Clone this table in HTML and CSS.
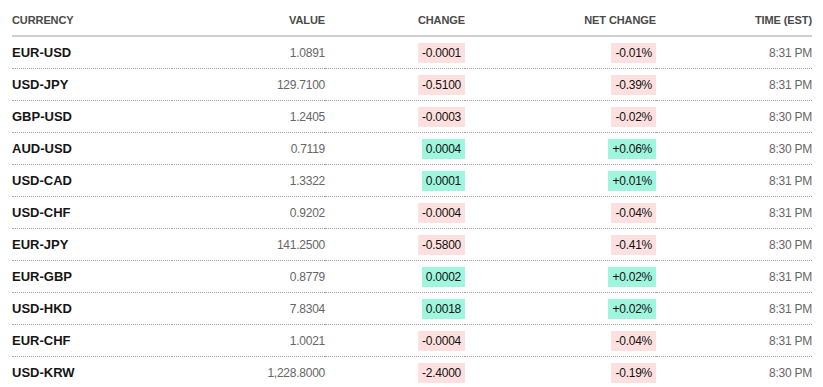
FILE: index.html
```html
<!DOCTYPE html>
<html>
<head>
<meta charset="utf-8">
<link rel="stylesheet" href="styles.css">
</head>
<body>
<table class="fx">
  <colgroup>
    <col class="c-cur"><col class="c-val"><col class="c-chg"><col class="c-net"><col class="c-time">
  </colgroup>
  <thead>
    <tr>
      <th class="left">CURRENCY</th>
      <th>VALUE</th>
      <th>CHANGE</th>
      <th>NET CHANGE</th>
      <th>TIME (EST)</th>
    </tr>
  </thead>
  <tbody>
    <tr><td class="name">EUR-USD</td><td class="num">1.0891</td><td><span class="badge neg">-0.0001</span></td><td><span class="badge neg">-0.01%</span></td><td class="num">8:31 PM</td></tr>
    <tr><td class="name">USD-JPY</td><td class="num">129.7100</td><td><span class="badge neg">-0.5100</span></td><td><span class="badge neg">-0.39%</span></td><td class="num">8:31 PM</td></tr>
    <tr><td class="name">GBP-USD</td><td class="num">1.2405</td><td><span class="badge neg">-0.0003</span></td><td><span class="badge neg">-0.02%</span></td><td class="num">8:30 PM</td></tr>
    <tr><td class="name">AUD-USD</td><td class="num">0.7119</td><td><span class="badge pos">0.0004</span></td><td><span class="badge pos">+0.06%</span></td><td class="num">8:30 PM</td></tr>
    <tr><td class="name">USD-CAD</td><td class="num">1.3322</td><td><span class="badge pos">0.0001</span></td><td><span class="badge pos">+0.01%</span></td><td class="num">8:31 PM</td></tr>
    <tr><td class="name">USD-CHF</td><td class="num">0.9202</td><td><span class="badge neg">-0.0004</span></td><td><span class="badge neg">-0.04%</span></td><td class="num">8:31 PM</td></tr>
    <tr><td class="name">EUR-JPY</td><td class="num">141.2500</td><td><span class="badge neg">-0.5800</span></td><td><span class="badge neg">-0.41%</span></td><td class="num">8:30 PM</td></tr>
    <tr><td class="name">EUR-GBP</td><td class="num">0.8779</td><td><span class="badge pos">0.0002</span></td><td><span class="badge pos">+0.02%</span></td><td class="num">8:31 PM</td></tr>
    <tr><td class="name">USD-HKD</td><td class="num">7.8304</td><td><span class="badge pos">0.0018</span></td><td><span class="badge pos">+0.02%</span></td><td class="num">8:31 PM</td></tr>
    <tr><td class="name">EUR-CHF</td><td class="num">1.0021</td><td><span class="badge neg">-0.0004</span></td><td><span class="badge neg">-0.04%</span></td><td class="num">8:31 PM</td></tr>
    <tr><td class="name">USD-KRW</td><td class="num">1,228.8000</td><td><span class="badge neg">-2.4000</span></td><td><span class="badge neg">-0.19%</span></td><td class="num">8:30 PM</td></tr>
  </tbody>
</table>
</body>
</html>
```
FILE: styles.css
```css
html, body {
  margin: 0;
  padding: 0;
  background: #ffffff;
}
body {
  font-family: "Liberation Sans", Arial, sans-serif;
  color: #111;
}
.fx {
  border-collapse: collapse;
  margin: 0 12px;
  width: 800px;
  table-layout: fixed;
}
.c-cur { width: 160px; }
.c-val { width: 153px; }
.c-chg { width: 140px; }
.c-net { width: 191px; }
.c-time { width: 156px; }

.fx th {
  height: 36px;
  padding: 4px 0 0;
  box-sizing: border-box;
  font-size: 11px;
  font-weight: bold;
  color: #4a4a4a;
  text-align: right;
  border-bottom: 2px solid #cfcfcf;
  letter-spacing: -0.1px;
}
.fx th.left { text-align: left; }
.fx td {
  height: 31px;
  padding: 0;
  text-align: right;
  border-bottom: 1px dotted #a0a0a0;
  font-size: 12px;
  letter-spacing: -0.25px;
  vertical-align: middle;
}
.fx tbody tr:last-child td { border-bottom: none; }
.fx td.name {
  text-align: left;
  font-size: 13px;
  font-weight: bold;
  color: #151515;
  letter-spacing: 0;
}
.fx td.num { color: #666; }
.badge {
  display: inline-block;
  line-height: 20px;
  padding: 0 4px;
  color: #111;
}
.neg { background: #ffe0e0; }
.pos { background: #9ff5de; }
```
